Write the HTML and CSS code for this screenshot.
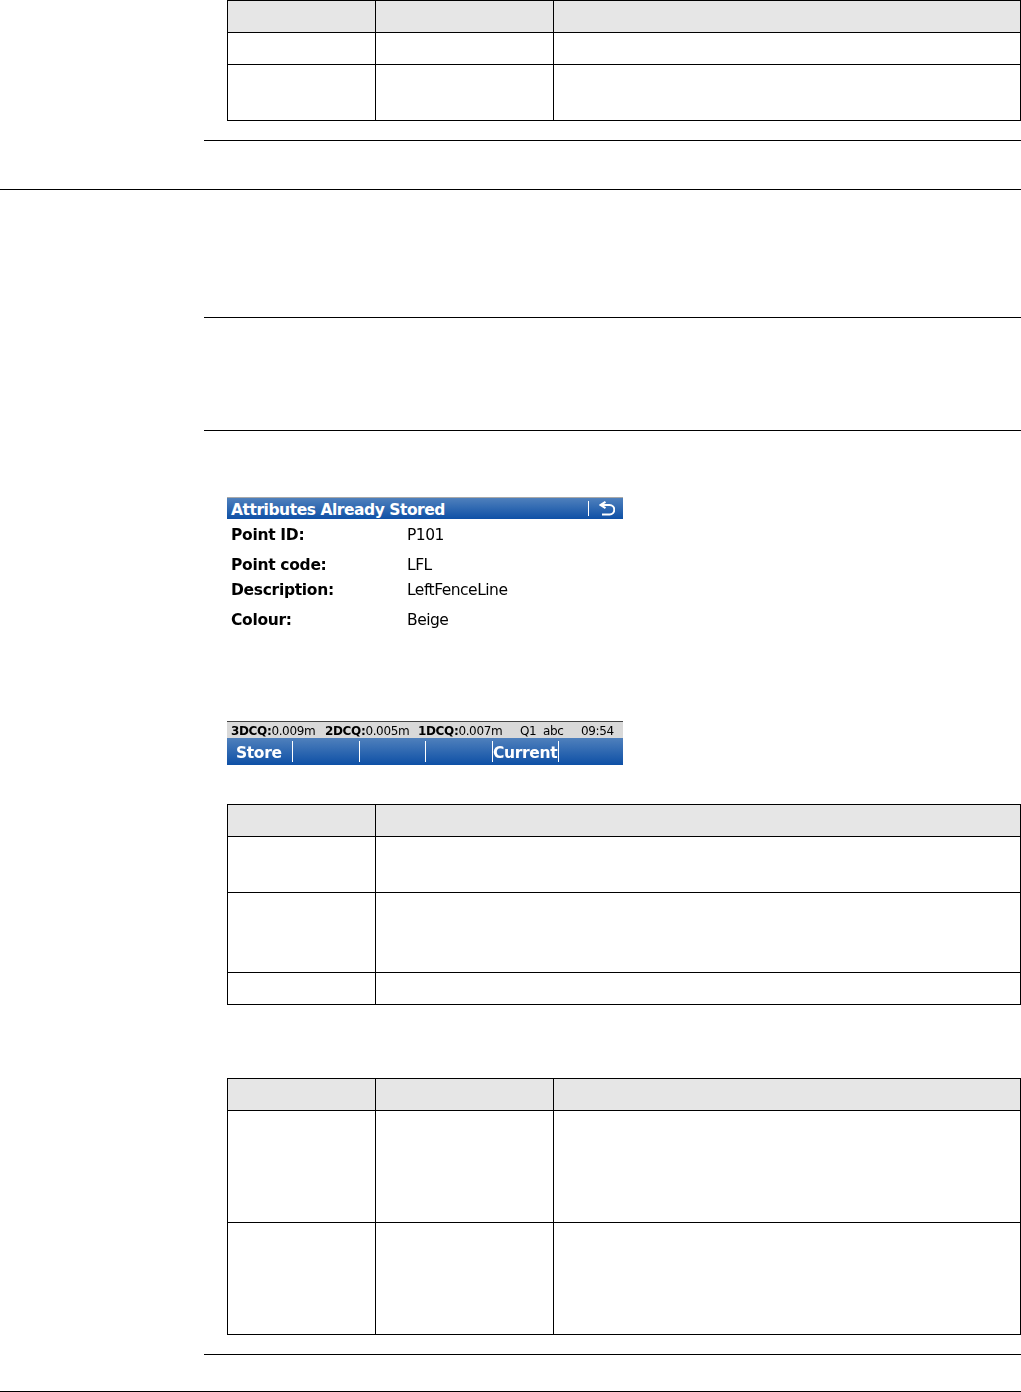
FILE: index.html
```html
<!DOCTYPE html>
<html lang="en">
<head>
<meta charset="utf-8">
<title>Attributes Already Stored</title>
<link rel="stylesheet" href="styles.css">
</head>
<body>
<div class="page">
  <table class="grid three t1">
    <colgroup><col class="c1"><col class="c2"><col class="c3"></colgroup>
    <tr class="head h32"><th></th><th></th><th></th></tr>
    <tr class="h32"><td></td><td></td><td></td></tr>
    <tr class="h56"><td></td><td></td><td></td></tr>
  </table>
  <div class="rule r1"></div>
  <div class="rule full r2"></div>
  <div class="rule r3"></div>
  <div class="rule r4"></div>

  <section class="screen">
    <header class="titlebar">
      <span class="title">Attributes Already Stored</span>
      <span class="titlesep"></span>
      <svg class="back" width="16" height="15" viewBox="0 0 16 15" aria-hidden="true"><path d="M6.5 .8 1.6 4 6.5 7.2M2 4h8.6a4.7 4.7 0 0 1 0 9.4H3" fill="none" stroke="#fff" stroke-width="2"/></svg>
    </header>
    <div class="form">
      <span class="lab">Point ID:</span><span class="val">P101</span>
      <span class="lab">Point code:</span><span class="val">LFL</span>
      <span class="lab">Description:</span><span class="val">LeftFenceLine</span>
      <span class="lab">Colour:</span><span class="val">Beige</span>
    </div>
    <div class="status">
      <span><b>3DCQ:</b>0.009m</span>
      <span><b>2DCQ:</b>0.005m</span>
      <span><b>1DCQ:</b>0.007m</span>
      <span>Q1</span>
      <span>abc</span>
      <span>09:54</span>
    </div>
    <div class="keys">
      <span class="key first">Store</span>
      <span class="key"></span>
      <span class="key"></span>
      <span class="key"></span>
      <span class="key">Current</span>
    </div>
  </section>

  <table class="grid two t2">
    <colgroup><col class="c1"><col class="c23"></colgroup>
    <tr class="head h32"><th></th><th></th></tr>
    <tr class="h56"><td></td><td></td></tr>
    <tr class="h80"><td></td><td></td></tr>
    <tr class="h32"><td></td><td></td></tr>
  </table>

  <table class="grid three t3">
    <colgroup><col class="c1"><col class="c2"><col class="c3"></colgroup>
    <tr class="head h32"><th></th><th></th><th></th></tr>
    <tr class="h112"><td></td><td></td><td></td></tr>
    <tr class="h112"><td></td><td></td><td></td></tr>
  </table>
  <div class="rule r5"></div>
  <div class="rule full r6"></div>
</div>
</body>
</html>
```
FILE: styles.css
```css
* { box-sizing: border-box; }
html, body { margin: 0; padding: 0; background: #fff; }
.page { width: 1021px; height: 1392px; overflow: hidden; display: flow-root; }

.grid { border-collapse: separate; border-spacing: 0; table-layout: fixed; width: 794px; margin-left: 227px; border-top: 1px solid #000; border-left: 1px solid #000; }
.grid th, .grid td { border-right: 1px solid #000; border-bottom: 1px solid #000; padding: 0; }
.head th { background: #e6e6e6; }
.c1 { width: 148px; }
.c2 { width: 178px; }
.c3 { width: 467px; }
.c23 { width: 645px; }
.h32 { height: 32px; }
.h56 { height: 56px; }
.h80 { height: 80px; }
.h112 { height: 112px; }

.rule { height: 1px; background: #000; margin-left: 204px; }
.rule.full { margin-left: 0; }
.r1 { margin-top: 19px; }
.r2 { margin-top: 48px; }
.r3 { margin-top: 127px; }
.r4 { margin-top: 112px; }
.r5 { margin-top: 19px; }
.r6 { margin-top: 36px; }

.t2 { margin-top: 39px; }
.t3 { margin-top: 73px; }

.screen { margin: 66px 0 0 227px; width: 396px; height: 268px; display: flex; flex-direction: column; font-family: "DejaVu Sans", sans-serif; color: #000; filter: blur(0.25px); }
.titlebar { height: 22px; flex: none; display: flex; align-items: center; padding-left: 4px; border-top: 1px solid #a9a9a9; background: linear-gradient(#4f80bc, #0e50a6); color: #fff; }
.title { font-weight: 700; font-size: 15.5px; letter-spacing: -0.46px; line-height: 20px; flex: 1; padding-top: 2px; }
.titlesep { width: 1px; height: 15px; background: #fff; margin-right: 10px; }
.back { flex: none; margin-right: 8px; }

.form { flex: 1; display: grid; grid-template-columns: 176px 1fr; grid-template-rows: 30px 25px 30px 20px; align-content: start; padding: 6px 0 0 4px; font-size: 15.5px; line-height: 20px; }
.lab { font-weight: 700; font-size: 15.5px; letter-spacing: -0.3px; }
.val { letter-spacing: -0.5px; }

.status { flex: none; height: 17px; display: grid; grid-template-columns: 94px 93px 102px 23px 38px 1fr; padding: 1px 0 0 4px; align-items: center; background: #d9d9d9; border-top: 1px solid #444; font-size: 12px; line-height: 16px; letter-spacing: -0.35px; white-space: nowrap; }
.status b { font-weight: 700; }

.keys { flex: none; height: 27px; display: grid; grid-template-columns: 66px 67px 66px 67px 66px; background: linear-gradient(#4f80bc, #0e50a6); color: #fff; font-weight: 700; font-size: 15.5px; letter-spacing: -0.35px; }
.key { display: flex; align-items: center; height: 21px; margin-top: 3px; padding-top: 2px; border-right: 1px solid #fff; line-height: 20px; }
.first { padding-left: 9px; }
```
